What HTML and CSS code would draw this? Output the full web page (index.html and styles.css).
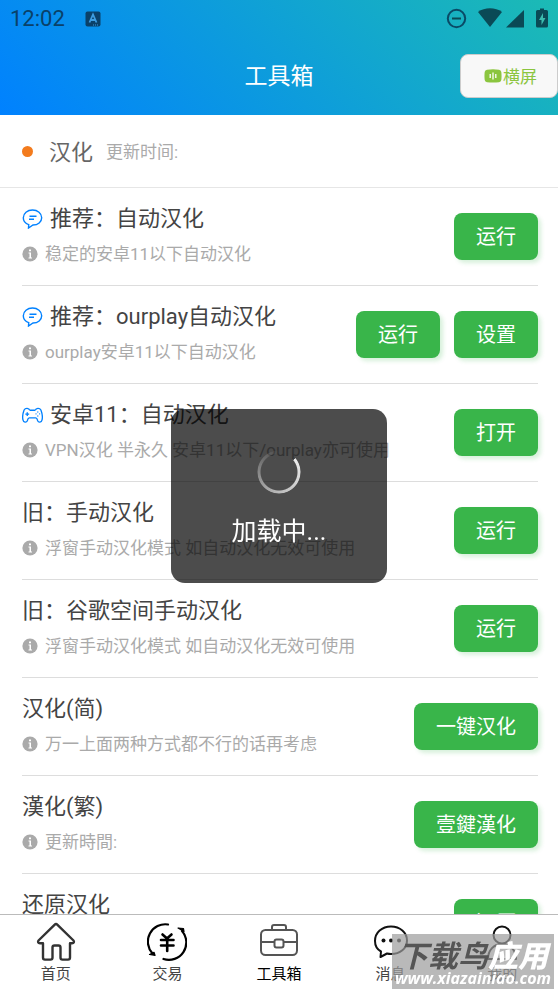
FILE: index.html
```html
<!DOCTYPE html>
<html lang="zh-CN">
<head>
<meta charset="utf-8">
<meta name="viewport" content="width=device-width, initial-scale=1">
<title>工具箱</title>
<link rel="stylesheet" href="styles.css">
</head>
<body>
<svg class="sprite" aria-hidden="true">
  <symbol id="i-info" viewBox="0 0 16 16"><circle cx="8" cy="8" r="7.6" fill="#aaa"/><path d="M7 3.500h2v1.800H7zM6.500 6.500H9v5h1v1H6.500v-1h1v-4h-1z" fill="#fff"/></symbol>
  <symbol id="i-chat" viewBox="0 0 20 20"><path d="M6.200 15.600C2.900 14.500.8 12 .8 8.700.8 4.300 4.900 1 10 1s9.200 3.300 9.200 7.700c0 4.300-3.800 7.200-8.700 7.300L6 19z" /><path d="M7 7.300h7M6.500 10.300h5"/></symbol>
  <symbol id="i-game" viewBox="0 0 22 18"><path d="M8 4h6M8 4C7.500 1.700 3.600 1.200 2.200 3.800.8 7.500.5 12 1 14c.6 3 3.800 3 4.600 1 .4-1.500.6-3 2-3h6.800c1.400 0 1.600 1.500 2 3 .8 2 4 2 4.600-1 .5-2 .2-6.500-1.200-10.200C18.400 1.200 14.500 1.700 14 4M5.500 6v4M3.500 8h4M16.500 5.300v1M16.500 9.500v1M14.200 7.900h1M18 7.900h1"/></symbol>
</svg>
<div class="app">
  <header class="top">
    <div class="status">
      <span class="clock">12:02</span>
      <svg class="badge" viewBox="0 0 16 16"><rect x=".5" y=".5" width="15" height="15" rx="2" fill="#0a4169"/><path d="M4.500 11.500L8 3.500l3.500 8M5.800 9h4.400" fill="none" stroke="#3d9de0" stroke-width="1.800"/><path d="M8 14h6" stroke="#3d9de0" stroke-dasharray="1 1"/></svg>
      <svg class="signals" viewBox="0 0 104 22"><g fill="#0a4a56"><circle cx="10.500" cy="10.500" r="8.700" fill="none" stroke="#0a4a66" stroke-width="2"/><path d="M6 9.500h9v2H6z"/><path d="M32 4c6.500-5 17.500-5 24 0L44 19z"/><path d="M60 19.500L78 2v17.500z"/><path d="M90 3.500q0-1.500 1.500-1.500H94V.5h4V2h2.500q1.500 0 1.500 1.500V18q0 1.500-1.500 1.500h-9Q90 19.500 90 18z"/></g><path d="M97 5l-4 7h2.500v5l4-7H97z" fill="#3cbcae"/></svg>
    </div>
    <div class="bar">
      <h1>工具箱</h1>
      <button class="rotate" type="button"><svg viewBox="0 0 18 14"><path d="M3 .8Q9-.2 15 .8q2 .3 2.300 2.200.5 4 0 8-.3 1.900-2.300 2.200-6 .8-12 0Q1 12.900.7 11q-.5-4 0-8Q1 1.100 3 .8z" fill="#8bc53f"/><path d="M6.200 5v4M9 3.500v7M11.800 5v4" stroke="#fff" stroke-width="1.300"/></svg><span>横屏</span></button>
    </div>
  </header>

  <main>
    <div class="section"><i class="dot"></i><h2>汉化</h2><span>更新时间:</span></div>
    <ul class="tools">
      <li><div class="info"><h3><svg class="lead"><use href="#i-chat"/></svg>推荐：自动汉化</h3><p><svg><use href="#i-info"/></svg>稳定的安卓11以下自动汉化</p></div><button type="button">运行</button></li>
      <li><div class="info"><h3><svg class="lead"><use href="#i-chat"/></svg>推荐：ourplay自动汉化</h3><p><svg><use href="#i-info"/></svg>ourplay安卓11以下自动汉化</p></div><button type="button">运行</button><button type="button">设置</button></li>
      <li><div class="info"><h3><svg class="lead"><use href="#i-game"/></svg>安卓11：自动汉化</h3><p><svg><use href="#i-info"/></svg>VPN汉化 半永久 安卓11以下/ourplay亦可使用</p></div><button type="button">打开</button></li>
      <li><div class="info"><h3>旧：手动汉化</h3><p><svg><use href="#i-info"/></svg>浮窗手动汉化模式 如自动汉化无效可使用</p></div><button type="button">运行</button></li>
      <li><div class="info"><h3>旧：谷歌空间手动汉化</h3><p><svg><use href="#i-info"/></svg>浮窗手动汉化模式 如自动汉化无效可使用</p></div><button type="button">运行</button></li>
      <li><div class="info"><h3>汉化(简)</h3><p><svg><use href="#i-info"/></svg>万一上面两种方式都不行的话再考虑</p></div><button type="button">一键汉化</button></li>
      <li><div class="info"><h3>漢化(繁)</h3><p><svg><use href="#i-info"/></svg>更新時間:</p></div><button type="button">壹鍵漢化</button></li>
      <li><div class="info"><h3>还原汉化</h3></div><button type="button">还原</button></li>
    </ul>
  </main>

  <nav class="tabs">
    <a href="#home"><svg viewBox="0 0 40 40" stroke="#333" stroke-width="2.400"><path d="M18.500 2.800Q20 1.400 21.500 2.800L37.500 18.500Q38.800 21 36 21.300H34V35.500Q34 37.600 32 37.600H26.500Q24.500 37.600 24.500 35.500V25.500Q24.500 23.500 22.500 23.500H18.500Q16.500 23.500 16.500 25.500V35.500Q16.500 37.600 14.500 37.600H9Q7 37.600 7 35.500V21.300H4Q1.200 21 2.500 18.500Z"/></svg>首页</a>
    <a href="#trade"><svg viewBox="0 0 40 40" stroke="#000" stroke-width="2.200" stroke-linecap="round"><path d="M21 2.500A17.400 17.400 0 0 0 5.500 31.500M16.500 37A17.400 17.400 0 0 0 35 9"/><path d="M2.500 32.500l5.500.8-1-3zM31 6l5.500.5.500 3z" fill="#000" stroke-width="1.200"/><path stroke-width="2.600" d="M15.500 12.500l4.500 4 4.500-4M14 18h12.500M14 23.500h12.500M20.200 17v12"/></svg>交易</a>
    <a class="on" href="#tools"><svg viewBox="0 0 40 40" stroke="#555" stroke-width="2"><rect x="2" y="8" width="36" height="25" rx="4.500"/><path d="M13 8V5q0-2 2-2h10q2 0 2 2v3M2 20h13M25 20h13"/><rect x="15.500" y="17.500" width="9" height="8" rx="2"/></svg>工具箱</a>
    <a href="#news"><svg viewBox="0 0 40 40" stroke="#111" stroke-width="2"><path d="M10 29.500C6 27.300 4 23.500 4 19 4 10.500 11 4.500 20 4.500S36 10.500 36 18.500 29 32 20 32q-2 0-4-.5L9.500 35z"/><g fill="#111" stroke="none"><circle cx="12.500" cy="18.500" r="2"/><circle cx="20" cy="18.500" r="2"/><circle cx="28" cy="18.500" r="2"/></g></svg>消息</a>
    <a href="#me"><svg viewBox="0 0 40 40" stroke="#111" stroke-width="2"><circle cx="20" cy="13" r="8.500"/><path d="M6 37C6 28 12 22 20 22s14 6 14 15z"/></svg>我的</a>
  </nav>
</div>
<div class="mask"><div class="toast" role="status"><i class="spinner"></i>加载中...</div></div>
<div class="watermark"><div class="name">下载鸟<b>应用</b></div><div class="site">www.xiazainiao.com</div></div>
</body>
</html>
```
FILE: styles.css
```css
* { box-sizing: border-box; margin: 0; padding: 0; }
body { font-family: Roboto, "Noto Sans CJK SC", sans-serif; color: #444; background: #fff; }
button { font: inherit; border: 0; }
h1, h2, h3 { font-weight: 400; }
.sprite { position: absolute; width: 0; height: 0; }
.app { height: 100vh; display: flex; flex-direction: column; }

.top { flex: none; background: linear-gradient(45deg, #0081ff, #1cbbb4); }
.status { display: flex; align-items: center; height: 37px; padding: 0 8px 0 10px; }
.clock { font-size: 22px; color: #0a4169; }
.badge { width: 16px; height: 16px; margin-left: 20px; }
.signals { width: 104px; height: 22px; margin-left: auto; }
.bar { display: grid; grid-template-columns: 1fr auto 1fr; align-items: center; height: 78px; }
.bar h1 { grid-column: 2; padding-bottom: 4px; font-size: 23px; color: #fff; }
.rotate { justify-self: end; display: flex; align-items: center; gap: 1px; height: 44px; padding: 0 20px 0 23px; border: 1px solid #ccc; border-radius: 8px; background: #f8f8f8; color: #8bc53f; font-size: 17px; }
.rotate svg { width: 18px; height: 14px; }
.rotate span { padding-bottom: 2px; }

main { flex: 1; min-height: 0; overflow: hidden; }
.section { display: flex; align-items: center; height: 73px; padding: 0 22px; border-bottom: 1px solid #e6e6e6; }
.dot { width: 11px; height: 11px; border-radius: 50%; background: #f37b1d; margin-right: 16px; }
.section h2 { padding-bottom: 2px; font-size: 22px; color: #666; margin-right: 13px; }
.section span { padding-bottom: 2px; font-size: 17px; color: #aaa; }
.tools { list-style: none; padding: 0 20px 0 22px; }
.tools li { display: flex; align-items: center; gap: 14px; height: 98px; border-bottom: 1px solid #ddd; }
.info { flex: 1; min-width: 0; min-height: 72px; white-space: nowrap; }
.info h3 { display: flex; align-items: center; font-size: 22px; line-height: 36px; }
.info p { display: flex; align-items: center; font-size: 17px; line-height: 34px; color: #aaa; }
.info p svg { width: 16px; height: 16px; margin-right: 7px; }
.info .lead { width: 21px; height: 20px; margin-right: 7px; fill: none; stroke: #0081ff; stroke-width: 1.4px; }
.tools button { height: 47px; padding: 0 22px 2px; border-radius: 8px; background: #39b54a; color: #fff; font-size: 20px; box-shadow: 3px 3px 4px rgba(57, 181, 74, .2); }

.tabs { flex: none; display: grid; grid-template-columns: repeat(5, 1fr); height: 78px; border-top: 1px solid #bbb; background: #fff; }
.tabs a { display: flex; flex-direction: column; align-items: center; padding-top: 7px; color: #444; font-size: 15px; line-height: 24px; text-decoration: none; }
.tabs .on { color: #000; }
.tabs svg { width: 40px; height: 40px; fill: none; stroke-linejoin: round; }

.mask { position: fixed; inset: 0; display: grid; place-items: center; }
.toast { display: flex; flex-direction: column; align-items: center; gap: 20px; padding: 41px 61px 33px; border-radius: 14px; background: rgba(0, 0, 0, .7); color: #fff; font-size: 25px; line-height: 36px; }
.spinner { width: 44px; height: 44px; border-radius: 50%; background: conic-gradient(transparent 50deg, #eee 50deg, #bbb 180deg, #888 270deg, transparent 360deg); mask: radial-gradient(circle, transparent 18px, #000 19px, #000 21px, transparent 22px); }

.watermark { position: fixed; right: 4px; bottom: 3px; width: 162px; height: 55px; padding-top: 5px; background: rgba(155, 155, 155, .7); color: #fff; text-align: center; font-weight: 700; font-style: italic; white-space: nowrap; }
.name { color: #555; font-size: 30px; line-height: 36px; }
.name b { color: #fff; }
.site { font-family: "Open Sans", sans-serif; font-size: 16px; line-height: 6px; }
```
